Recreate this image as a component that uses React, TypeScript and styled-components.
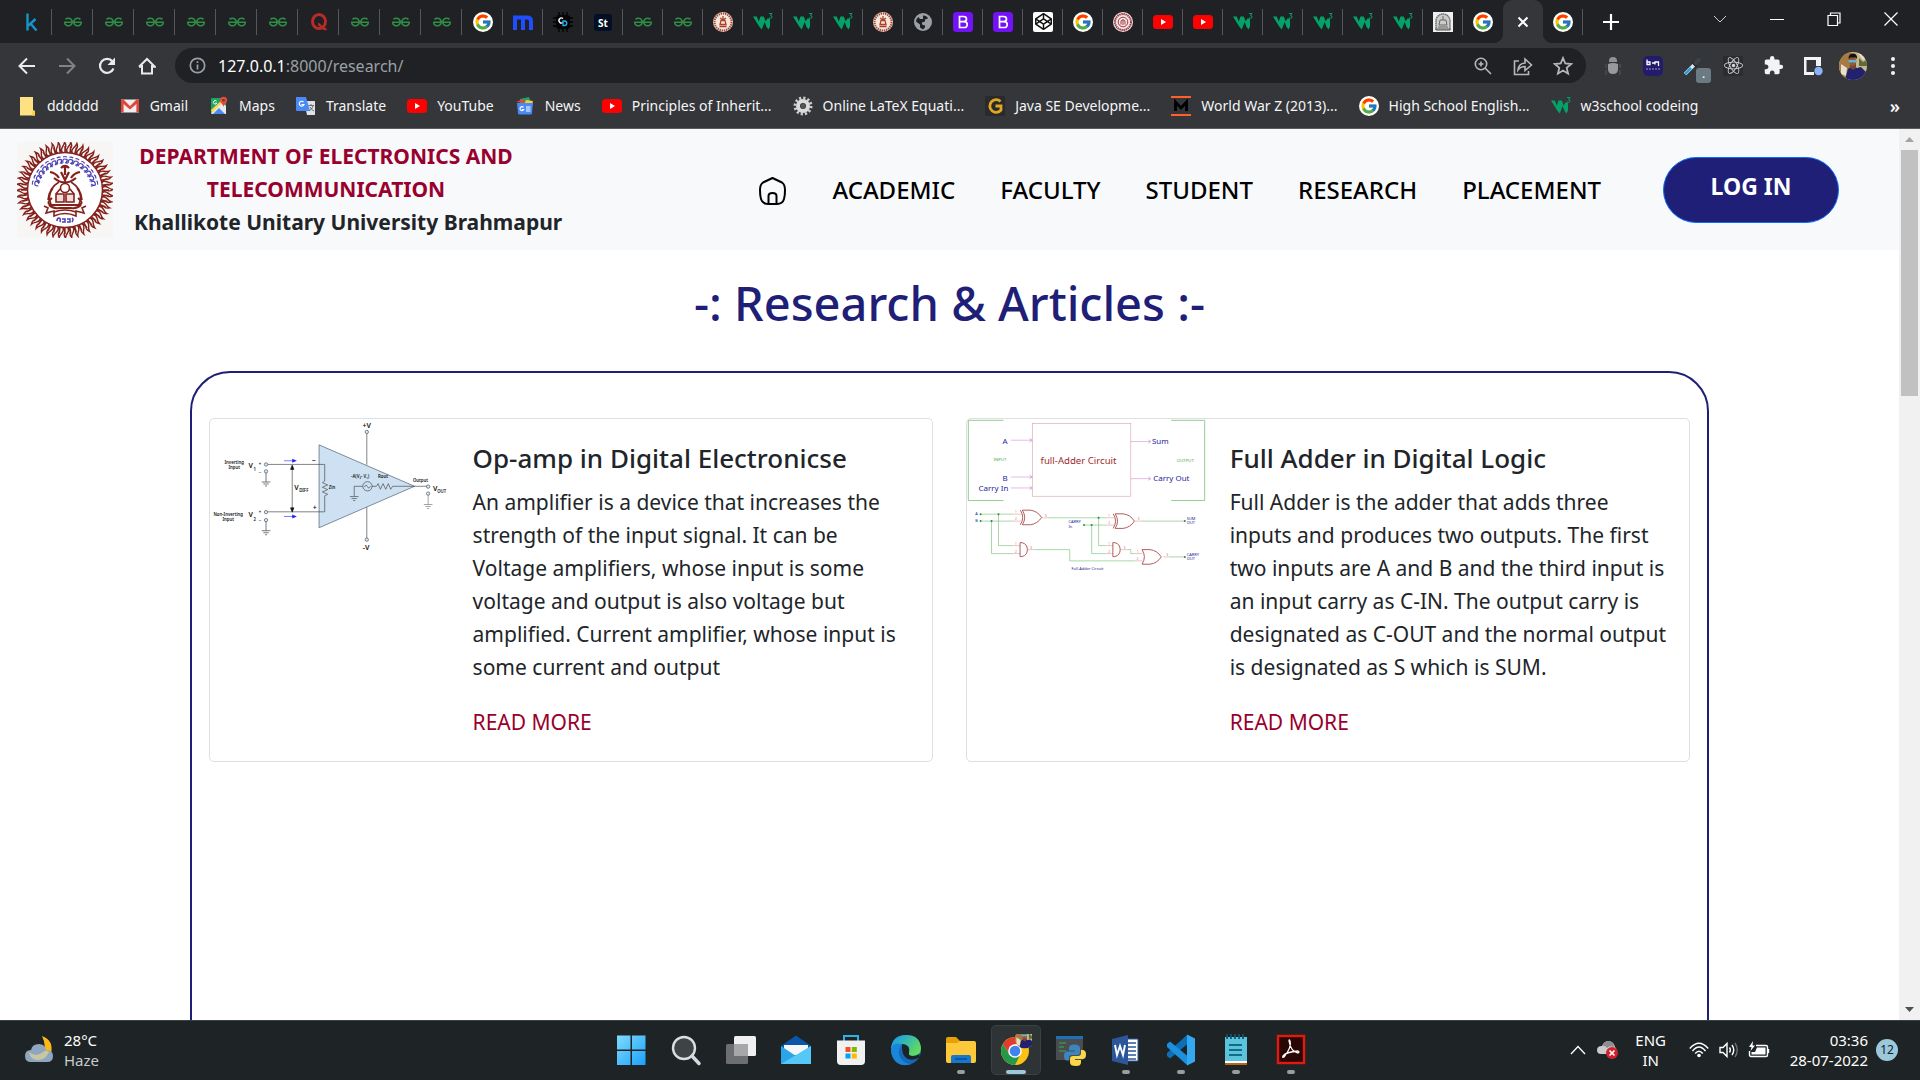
import React from "react";
import styled, { createGlobalStyle, css } from "styled-components";
import { FcGoogle } from "react-icons/fc";
import { FaReact, FaCodepen } from "react-icons/fa";
import { MdExtension } from "react-icons/md";
import { SiGeeksforgeeks } from "react-icons/si";

const GlobalStyle = createGlobalStyle`
  * { box-sizing: border-box; }
  html, body, #root { height: 100%; }
  body { margin: 0; overflow: hidden; font-family: "Noto Sans", "Open Sans", sans-serif; color: #212529; background: #fff; }
  h1, h2, p, ul { margin: 0; padding: 0; }
  ul { list-style: none; }
  a { color: inherit; text-decoration: none; }
  button { font: inherit; color: inherit; background: none; border: 0; padding: 0; }
  svg { display: block; flex: none; }
`;

const Desktop = styled.div`
  display: grid;
  grid-template-rows: auto minmax(0, 1fr) 60px;
  height: 100vh;
`;

/* ---------- favicons and small marks ---------- */

const IconBox = styled.span<{ $bg?: string; $round?: string; $color?: string }>`
  display: flex;
  align-items: center;
  justify-content: center;
  flex: none;
  width: 20px;
  height: 20px;
  background: ${(p) => p.$bg ?? "transparent"};
  border-radius: ${(p) => p.$round ?? "0"};
  color: ${(p) => p.$color ?? "inherit"};
`;

const GoogleMark = () => (
  <IconBox $bg="#fff" $round="50%"><FcGoogle size={18} /></IconBox>
);

const GfgMark = () => (
  <IconBox $color="#2f8d46"><SiGeeksforgeeks size={18} /></IconBox>
);

const YouTubeMark = () => (
  <svg width="20" height="20" viewBox="0 0 20 20">
    <rect y="3" width="20" height="14" rx="3.5" fill="#f00" />
    <path d="M8 7l5 3-5 3z" fill="#fff" />
  </svg>
);

const W3Mark = () => (
  <svg width="20" height="20" viewBox="0 0 20 20">
    <path d="M0 4.500h3.800l2 5 1.700-5h3.300l1.900 5 1.600-3h2.700v8l-1.600 3-2.100-3-1.600-4.500-3 7.500-2.500-3z" fill="#04a268" />
    <path d="M16 1.500h3l-1.500 2q2 .2 1.500 2-1 1.500-2.800.2" fill="none" stroke="#04a268" strokeWidth="1" />
  </svg>
);

const KMark = () => (
  <svg width="20" height="20" viewBox="0 0 20 20" fill="none" stroke="#1296cc" strokeWidth="2.400">
    <path d="M5.500 1.500v17M13.500 7l-7 6.500M8.500 11.500l6 7" />
  </svg>
);

const QMark = () => (
  <svg width="20" height="20" viewBox="0 0 20 20" fill="none" stroke="#b92b27">
    <ellipse cx="10" cy="9.500" rx="6.500" ry="7" strokeWidth="3" />
    <path d="M9 12c3 0 3 6 8.500 5" strokeWidth="2.400" />
  </svg>
);

const MMark = () => (
  <svg width="20" height="20" viewBox="0 0 20 20" fill="none" stroke="#1f4dff" strokeWidth="4">
    <path d="M2 18V4M10 18V5M18 18V9q0-3.500-4-3.500H0" />
  </svg>
);

const ChipMark = () => (
  <svg width="20" height="20" viewBox="0 0 20 20">
    <path d="M6 0v20M10 0v20M14 0v20M0 6h20M0 10h20M0 14h20" stroke="#000" strokeWidth="1.300" />
    <rect x="3" y="3" width="14" height="14" rx="3" fill="#050505" />
    <path d="M10 6.500a2.500 2.500 0 1 0 0 4" fill="none" stroke="#fff" strokeWidth="1.400" />
    <path d="M10 9h1.500a2 2 0 0 1 0 4.500H10z" fill="none" stroke="#1ab2e8" strokeWidth="1.400" />
  </svg>
);

const StMark = () => (
  <svg width="20" height="20" viewBox="0 0 20 20">
    <rect x="1" y="2" width="18" height="17" rx="3" fill="#020f24" />
    <text x="10" y="14.500" textAnchor="middle" fontSize="10" fontWeight="700" fill="#fff">St</text>
  </svg>
);

const SealMark = ({ color }: { color: string }) => (
  <svg width="20" height="20" viewBox="0 0 20 20">
    <circle cx="10" cy="10" r="10" fill="#f5e6de" />
    <circle cx="10" cy="10" r="8.500" fill="none" stroke={color} strokeWidth="2" strokeDasharray="1.400 .8" />
    <path d="M10 4v3M7 6l3 2 3-2M6.500 14.500h7M7 12.500h6l-1-4H8z" fill="none" stroke={color} strokeWidth="1.300" />
  </svg>
);

const RingSealMark = () => (
  <svg width="20" height="20" viewBox="0 0 20 20" fill="none" stroke="#a03a44">
    <circle cx="10" cy="10" r="10" fill="#f2e6e6" stroke="none" />
    <circle cx="10" cy="10" r="8" strokeWidth="2" strokeDasharray="1.500 .6" />
    <circle cx="10" cy="10" r="4.800" />
    <path d="M8 12.500V9q2-3 4 0v3.500M10 8v5" />
  </svg>
);

const GlobeMark = () => (
  <svg width="20" height="20" viewBox="0 0 20 20">
    <circle cx="10" cy="10" r="9" fill="#9aa0a6" />
    <path d="M10 3.500q4 0 5 3l-3 1v2l-3 1v2l3 1v2l-2 2-3-2v-3L3 9.500q0-3 2.500-4.500L7 7h3z" fill="#202124" />
  </svg>
);

const BootstrapMark = () => (
  <svg width="20" height="20" viewBox="0 0 20 20">
    <rect width="20" height="20" rx="3.500" fill="#7412f7" />
    <path d="M6.500 4.500h4q3 0 3 2.600t-3 2.600h-4zM6.500 9.700h4.500q3.200 0 3.200 2.900t-3.200 2.900H6.500z" fill="none" stroke="#fff" strokeWidth="1.700" />
  </svg>
);

const CodepenMark = () => (
  <IconBox $bg="#fff" $round="2px" $color="#111"><FaCodepen size={17} /></IconBox>
);

const CrestMark = () => (
  <svg width="20" height="20" viewBox="0 0 20 20" fill="none" stroke="#666">
    <rect width="20" height="20" fill="#eee" stroke="none" />
    <path d="M3 18V9a7 7 0 0 1 14 0v9z" fill="#ccc" strokeWidth="1.400" strokeDasharray="1.500 .5" />
    <path d="M10 4v4M7 8h6l1 5H6zM5 15h10M2 17h16" strokeWidth="1" />
  </svg>
);

const FolderMark = () => (
  <svg width="20" height="20" viewBox="0 0 20 20">
    <path d="M3 1h13v13l2 1v4.500H3z" fill="#ffe082" />
    <path d="M15 19.500v-4q1.500-1 3 0v4z" fill="#ffcf48" />
  </svg>
);

const GmailMark = () => (
  <svg width="20" height="20" viewBox="0 0 20 20">
    <path d="M1 3.500h18v13H1z" fill="#eee" />
    <path d="M1 3.500h2.500L10 10l6.500-6.500H19v13h-2.600V8L10 13.500 3.600 8v8.500H1z" fill="#e0463a" />
  </svg>
);

const MapsMark = () => (
  <svg width="20" height="20" viewBox="0 0 20 20">
    <rect x="2" y="2" width="15" height="16" rx="1" fill="#1fa463" />
    <path d="M2 17L13 6l4 4v8H3z" fill="#e8eaed" />
    <path d="M4 18l6-6 6 6z" fill="#4a8af4" />
    <path d="M2 14L13 4v3L3 17z" fill="#ffd54b" />
    <path d="M14.500 11C14 8 11 7 11 4.300a3.600 3.600 0 0 1 7.200 0C18.200 7 15 8 14.500 11z" fill="#e04a3f" />
    <circle cx="14.600" cy="4.200" r="1.300" fill="#8c2b22" />
    <path d="M7.500 5a1.800 1.800 0 1 0 .3 2.200H6.200" fill="none" stroke="#fff" />
  </svg>
);

const TranslateMark = () => (
  <svg width="20" height="20" viewBox="0 0 20 20">
    <path d="M8 5h11v14h-8z" fill="#dfe1e5" />
    <path d="M0 1h10l4 14H1q-1 0-1-1z" fill="#4a8af4" />
    <path d="M7.500 6a2.400 2.400 0 1 0 .5 2.500H5.500" fill="none" stroke="#fff" strokeWidth="1.200" />
    <path d="M12.500 9.500h5.500M15 8v1.500M17 10q-1 3.500-4 5M14 11q1 2.500 4 4" fill="none" stroke="#6b7075" strokeWidth="1" />
  </svg>
);

const NewsMark = () => (
  <svg width="20" height="20" viewBox="0 0 20 20">
    <path d="M5 3l9-2 2 6H5z" fill="#1fa463" />
    <path d="M1 6l7-3 3 4z" fill="#e0463a" />
    <path d="M11 4l7 1-1 4h-8z" fill="#ffc83d" />
    <path d="M2 7h16l-1 10q0 1.500-1.500 1.500h-11Q3 18.500 3 17z" fill="#4a8af4" />
    <path d="M8.500 11.300a2 2 0 1 0 .3 2.200H7M11 11h4.500M11 13h4.500M11 15h4.500" fill="none" stroke="#fff" strokeWidth="1.100" />
  </svg>
);

const GearMark = () => (
  <svg width="20" height="20" viewBox="0 0 20 20" fill="none">
    <circle cx="10" cy="10" r="8" stroke="#c9cbcd" strokeWidth="3" strokeDasharray="2.200 1.990" />
    <circle cx="10" cy="10" r="5" stroke="#dadada" strokeWidth="4" />
    <circle cx="10" cy="10" r="2.200" fill="#55575a" />
  </svg>
);

const GoldGMark = () => (
  <svg width="20" height="20" viewBox="0 0 20 20">
    <rect width="20" height="20" fill="#292a2c" />
    <path d="M15.500 5.500A6.300 6.300 0 1 0 16 14v-4h-5.500" fill="none" stroke="#dfa722" strokeWidth="2.800" />
  </svg>
);

const MovieMark = () => (
  <svg width="20" height="20" viewBox="0 0 20 20">
    <path d="M0 1h20M0 19h20" stroke="#ff5f2b" strokeWidth="2.200" />
    <path d="M4.500 15V6l5.500 6 5.500-6v9" fill="none" stroke="#000" strokeWidth="2.800" />
  </svg>
);

/* ---------- browser: tab strip ---------- */

const Chrome = styled.header`
  background: #35363a;
  color: #e8eaed;
  border-bottom: 1px solid #5a5b5e;
`;

const TabStrip = styled.div`
  display: flex;
  align-items: stretch;
  height: 43px;
  padding-left: 11px;
  background: #202124;
`;

const Tab = styled.button<{ $wide?: boolean; $active?: boolean; $plain?: boolean }>`
  position: relative;
  display: flex;
  align-items: center;
  justify-content: center;
  width: ${(p) => (p.$wide ? "41px" : "40px")};
  &::after {
    content: "";
    position: absolute;
    right: 0;
    top: 9px;
    width: 1px;
    height: 26px;
    background: ${(p) => (p.$plain || p.$active ? "transparent" : "#55575b")};
  }
  ${(p) => p.$active && css`
    background: #35363a;
    border-radius: 9px 9px 0 0;
    &::before {
      content: "";
      position: absolute;
      left: -9px;
      right: -9px;
      bottom: 0;
      height: 9px;
      background:
        radial-gradient(circle at 0 0, transparent 9px, #35363a 9px) left / 9px 9px no-repeat,
        radial-gradient(circle at 9px 0, transparent 9px, #35363a 9px) right / 9px 9px no-repeat;
    }
  `}
`;

const NewTab = styled.button`
  display: flex;
  align-items: center;
  justify-content: center;
  width: 56px;
`;

const WindowControls = styled.div`
  display: flex;
  margin-left: auto;
  padding: 0 1px 6px 0;
`;

const WindowButton = styled.button`
  display: flex;
  align-items: center;
  justify-content: center;
  width: 57px;
`;

const tabs: { icon: () => React.ReactElement; name: string; wide?: boolean }[] = [
  { icon: KMark, name: "k", wide: true },
  ...Array.from({ length: 6 }, () => ({ icon: GfgMark, name: "GfG", wide: true })),
  { icon: QMark, name: "Q", wide: true },
  ...Array.from({ length: 3 }, () => ({ icon: GfgMark, name: "GfG", wide: true })),
  { icon: GoogleMark, name: "Google", wide: true },
  { icon: MMark, name: "M" },
  { icon: ChipMark, name: "Circuit" },
  { icon: StMark, name: "St" },
  { icon: GfgMark, name: "GfG" },
  { icon: GfgMark, name: "GfG" },
  { icon: () => <SealMark color="#a8442c" />, name: "University" },
  ...Array.from({ length: 3 }, () => ({ icon: W3Mark, name: "W3" })),
  { icon: () => <SealMark color="#a8442c" />, name: "University" },
  { icon: GlobeMark, name: "Site" },
  { icon: BootstrapMark, name: "Bootstrap" },
  { icon: BootstrapMark, name: "Bootstrap" },
  { icon: CodepenMark, name: "CodePen" },
  { icon: GoogleMark, name: "Google" },
  { icon: RingSealMark, name: "Seal" },
  { icon: YouTubeMark, name: "YouTube" },
  { icon: YouTubeMark, name: "YouTube" },
  ...Array.from({ length: 5 }, () => ({ icon: W3Mark, name: "W3" })),
  { icon: CrestMark, name: "Crest" },
];

const Tabs = () => (
  <TabStrip>
    {tabs.map(({ icon: Icon, name, wide }, i) => (
      <Tab key={i} $wide={wide} aria-label={name}><Icon /></Tab>
    ))}
    <Tab $plain aria-label="Google"><GoogleMark /></Tab>
    <Tab $active aria-label="Close tab">
      <svg width="12" height="12" viewBox="0 0 12 12" stroke="#fff" strokeWidth="2"><path d="M1.500 1.500l9 9M10.500 1.500l-9 9" /></svg>
    </Tab>
    <Tab aria-label="Google"><GoogleMark /></Tab>
    <NewTab aria-label="New tab">
      <svg width="16" height="16" viewBox="0 0 16 16" stroke="#fff" strokeWidth="2.200"><path d="M8 0v16M0 8h16" /></svg>
    </NewTab>
    <WindowControls>
      <WindowButton aria-label="Search tabs">
        <svg width="14" height="14" viewBox="0 0 14 14" fill="none" stroke="#cfd1d4"><path d="M1 4l6 6 6-6" /></svg>
      </WindowButton>
      <WindowButton aria-label="Minimize">
        <svg width="14" height="14" viewBox="0 0 14 14" stroke="#fff"><path d="M0 7.500h14" /></svg>
      </WindowButton>
      <WindowButton aria-label="Restore">
        <svg width="14" height="14" viewBox="0 0 14 14" fill="none" stroke="#fff" strokeWidth="1.200"><path d="M1 3.500h9.500v10H1zM3.500 3.500V1H13v10h-2.500" /></svg>
      </WindowButton>
      <WindowButton aria-label="Close">
        <svg width="14" height="14" viewBox="0 0 14 14" stroke="#fff" strokeWidth="1.200"><path d="M.5.5l13 13M13.500.5l-13 13" /></svg>
      </WindowButton>
    </WindowControls>
  </TabStrip>
);

/* ---------- browser: toolbar and bookmarks ---------- */

const Toolbar = styled.div`
  display: flex;
  align-items: center;
  height: 45px;
  padding: 0 7px;
`;

const ToolButton = styled.button`
  position: relative;
  display: flex;
  align-items: center;
  justify-content: center;
  flex: none;
  width: 40px;
  height: 35px;
`;

const AddressBar = styled.div`
  display: flex;
  align-items: center;
  flex: 1;
  height: 35px;
  margin: 0 7px 0 8px;
  padding: 0 3px 0 14px;
  border-radius: 18px;
  background: #202124;
`;

const UrlView = styled.label`
  position: relative;
  display: flex;
  flex: 1;
  margin-left: 12px;
  font-size: 16px;
  line-height: 24px;
  color: #9aa0a6;
`;

const UrlHost = styled.span`
  color: #fff;
`;

const UrlInput = styled.input`
  position: absolute;
  inset: 0;
  width: 100%;
  border: 0;
  background: transparent;
`;

const PickerBadge = styled.span`
  position: absolute;
  right: 2px;
  bottom: 0;
  width: 15px;
  height: 15px;
  border-radius: 3px;
  background: #6b7b83;
  color: #fff;
  font-size: 12px;
  line-height: 11px;
  text-align: center;
`;

const Portrait = ({ size }: { size: number }) => (
  <svg width={size} height={size} viewBox="0 0 28 28">
    <defs><clipPath id={`portrait${size}`}><circle cx="14" cy="14" r="14" /></clipPath></defs>
    <g clipPath={`url(#portrait${size})`}>
      <rect width="28" height="28" fill="#c9b98a" />
      <path d="M0 0h12v28H0z" fill="#a77a42" />
      <path d="M2 12l6 4-1 8-5-2zM18 0l6 8 4-2V0z" fill="#e7e0cd" />
      <path d="M20 6l4 4 4-2v6h-8z" fill="#5f6a3a" />
      <path d="M6 28l3-11 4-3 5 2 4-1 5 5v8z" fill="#20216f" />
      <path d="M11 10h6v6l-3 2-3-2z" fill="#7a452e" />
      <ellipse cx="13.500" cy="9" rx="3.800" ry="5" fill="#94593d" />
      <path d="M9.500 7q0-5.500 4.500-5.500T18 7l-1.500-1.500h-5z" fill="#16110f" />
      <path d="M9.500 8h8v2.200l-3 .6-1-1-1 1-3-.6z" fill="#5bbbd6" />
    </g>
  </svg>
);

const Bookmarks = styled.nav`
  display: flex;
  align-items: center;
  gap: 21px;
  height: 40px;
  padding: 0 20px 4px 17px;
  font-size: 14px;
  line-height: 20px;
  color: #f4f5f6;
`;

const Bookmark = styled.a`
  display: flex;
  align-items: center;
  gap: 10px;
  white-space: nowrap;
`;

const MoreBookmarks = styled.button`
  margin-left: auto;
  font-size: 18px;
  font-weight: 600;
  line-height: 20px;
`;

const bookmarks: [() => React.ReactElement, string][] = [
  [FolderMark, "dddddd"],
  [GmailMark, "Gmail"],
  [MapsMark, "Maps"],
  [TranslateMark, "Translate"],
  [YouTubeMark, "YouTube"],
  [NewsMark, "News"],
  [YouTubeMark, "Principles of Inherit..."],
  [GearMark, "Online LaTeX Equati..."],
  [GoldGMark, "Java SE Developme..."],
  [MovieMark, "World War Z (2013)..."],
  [GoogleMark, "High School English..."],
  [W3Mark, "w3school codeing"],
];

const stroke = { fill: "none", stroke: "#e8eaed", strokeWidth: 2 } as const;
const faint = { fill: "none", stroke: "#b4b7bb", strokeWidth: 1.6 } as const;

const BrowserChrome = () => (
  <Chrome>
    <Tabs />
    <Toolbar>
      <ToolButton aria-label="Back"><svg width="18" height="18" viewBox="0 0 18 18" {...stroke}><path d="M17 9H2M9 1.500L1.500 9 9 16.500" /></svg></ToolButton>
      <ToolButton aria-label="Forward"><svg width="18" height="18" viewBox="0 0 18 18" {...stroke} stroke="#808387"><path d="M1 9h15M9 1.500L16.500 9 9 16.500" /></svg></ToolButton>
      <ToolButton aria-label="Reload"><svg width="18" height="18" viewBox="0 0 18 18" {...stroke} strokeWidth={2.2}><path d="M15.500 11.500A7 7 0 1 1 14.500 4.500" /><path d="M17 .5V8H9.500z" fill="#e8eaed" stroke="none" /></svg></ToolButton>
      <ToolButton aria-label="Home"><svg width="18" height="18" viewBox="0 0 18 18" {...stroke}><path d="M4 8v8.500h10V8M1 9.800l8-7.800 8 7.800H14M4 9.800H1" /></svg></ToolButton>
      <AddressBar>
        <svg width="17" height="17" viewBox="0 0 17 17" fill="none" stroke="#9aa0a6" strokeWidth="1.700"><circle cx="8.500" cy="8.500" r="7.200" /><path d="M8.500 7.500v5M8.500 4.300v1.700" /></svg>
        <UrlView>
          <UrlHost>127.0.0.1</UrlHost>:8000/research/
          <UrlInput type="text" aria-label="Address" />
        </UrlView>
        <ToolButton aria-label="Zoom"><svg width="18" height="18" viewBox="0 0 18 18" {...faint}><circle cx="7" cy="7" r="5.700" /><path d="M11 11l6 6M7 4.500v5M4.500 7h5" /></svg></ToolButton>
        <ToolButton aria-label="Share"><svg width="20" height="20" viewBox="0 0 20 20" {...faint}><path d="M6 5H1.500v13.500h14V15M5 14q.5-6.500 7-7V3l6.500 6L12 14.500v-4Q7.500 10.500 5 14z" /></svg></ToolButton>
        <ToolButton aria-label="Bookmark"><svg width="20" height="20" viewBox="0 0 20 20" {...faint} strokeWidth={1.8}><path d="M10 2l2.300 5.500 6 .5-4.600 3.900 1.400 5.800L10 14.600l-5.100 3.100 1.400-5.800L1.700 8l6-.5z" /></svg></ToolButton>
      </AddressBar>
      <ToolButton aria-label="Bug"><svg width="16" height="20" viewBox="0 0 16 20"><path d="M1 8v4M15 8v4M1 14v5M15 14v5M3 10h10" stroke="#55575a" /><path d="M4 5q0-4 4-4t4 4v1H4z" fill="#8f9194" /><path d="M3 8q5-2 10 0v5q0 5-5 5t-5-5z" fill="#98999b" /></svg></ToolButton>
      <ToolButton aria-label="Best quiz"><svg width="20" height="20" viewBox="0 0 20 20"><rect width="20" height="20" rx="5" fill="#241c6a" /><path d="M4 3.500v5h3V6H4M9 7h3M12 8.500V6h3.500v4" fill="none" stroke="#fff" strokeWidth="1.300" /><path d="M3 13h14" stroke="#9896c4" strokeWidth="1.200" strokeDasharray="2 1" /></svg></ToolButton>
      <ToolButton aria-label="Colour picker">
        <svg width="20" height="20" viewBox="0 0 20 20"><path d="M2 18L11 9" stroke="#d3e8f2" strokeWidth="3.600" /><path d="M2 18L8 12" stroke="#2f9fd6" strokeWidth="2.600" /><path d="M9.500 6.500l4 4" stroke="#222" strokeWidth="2" /><path d="M11.500 8.500l5.500-6" stroke="#3b444b" strokeWidth="4" /></svg>
        <PickerBadge>.</PickerBadge>
      </ToolButton>
      <ToolButton aria-label="React"><IconBox $bg="#2b2c30" $color="#d6d7d9"><FaReact size={19} /></IconBox></ToolButton>
      <ToolButton aria-label="Extensions"><MdExtension size={21} color="#f1f3f4" /></ToolButton>
      <ToolButton aria-label="Side panel"><svg width="20" height="20" viewBox="0 0 20 20"><path d="M1 1h17v9h-5V4H3.500v12H11v3H1z" fill="#f1f3f4" /><circle cx="15.500" cy="15" r="4.200" fill="#8ab4f8" /></svg></ToolButton>
      <ToolButton aria-label="Profile"><Portrait size={28} /></ToolButton>
      <ToolButton aria-label="Menu"><svg width="4" height="18" viewBox="0 0 4 18" fill="#f1f3f4"><circle cx="2" cy="2" r="2" /><circle cx="2" cy="9" r="2" /><circle cx="2" cy="16" r="2" /></svg></ToolButton>
    </Toolbar>
    <Bookmarks>
      {bookmarks.map(([Icon, label]) => (
        <Bookmark key={label} href="#"><Icon />{label}</Bookmark>
      ))}
      <MoreBookmarks aria-label="More bookmarks">»</MoreBookmarks>
    </Bookmarks>
  </Chrome>
);

/* ---------- site ---------- */

const Viewport = styled.div`
  display: flex;
  min-height: 0;
`;

const Page = styled.div`
  flex: 1;
  overflow: hidden;
  background: #fff;
`;

const SiteHeader = styled.div`
  display: flex;
  align-items: center;
  height: 121px;
  padding: 0 60px 0 17px;
  background: #f8f9fb;
`;

const Brand = styled.a`
  display: flex;
  align-items: center;
  gap: 21px;
`;

const BrandText = styled.div`
  font-size: 21px;
  font-weight: 700;
  line-height: 33px;
`;

const Department = styled.p`
  width: 384px;
  color: #98002e;
  text-align: center;
`;

const Menu = styled.ul`
  display: flex;
  align-items: center;
  gap: 45px;
  margin-left: auto;
  color: #000;
  font-size: 24px;
  font-weight: 500;
  line-height: 36px;
`;

const LoginButton = styled.button`
  width: 176px;
  height: 66px;
  margin-left: 62px;
  padding-bottom: 8px;
  border: 1px solid #0d6efd;
  border-radius: 36px;
  background: #1f1f78;
  color: #fff;
  font-size: 23px;
  font-weight: 700;
`;

const PageTitle = styled.h1`
  margin: 24px 0 39px;
  color: #1f1f78;
  font-size: 47px;
  font-weight: 500;
  line-height: 58px;
  text-align: center;
`;

const Articles = styled.main`
  display: grid;
  grid-template-columns: 1fr 1fr;
  align-items: start;
  gap: 33px;
  width: 80%;
  min-height: 1200px;
  margin: 0 auto;
  padding: 45px 17px;
  border: 2px solid #1f1f78;
  border-radius: 40px;
`;

const Card = styled.article`
  display: grid;
  grid-template-columns: 1fr 2fr;
  border: 1px solid #dfdfdf;
  border-radius: 5px;
`;

const Figure = styled.svg`
  width: 100%;
  height: auto;
  font-family: "Noto Sans", sans-serif;
`;

const CardBody = styled.div`
  padding: 23px 18px 22px 22px;
  font-size: 21px;
  line-height: 33px;
`;

const CardTitle = styled.h2`
  margin-bottom: 11px;
  font-size: 26px;
  font-weight: 500;
  line-height: 33px;
`;

const ReadMore = styled.a`
  display: block;
  margin-top: 22px;
  color: #98002e;
`;

const Emblem = () => {
  const rays = Array.from({ length: 48 }, (_, i) => (i * 360) / 48);
  return (
    <svg width="96" height="96" viewBox="0 0 96 96">
      <rect width="96" height="96" fill="#f7f6f5" />
      <g fill="none" stroke="#84211b" strokeWidth="1.400">
        {rays.map((a) => (
          <path key={a} d="M45.500 11q-2-3 0-6t2-5q2 3 1 5t2 6M48 11V4" transform={`rotate(${a} 48 48)`} />
        ))}
      </g>
      <circle cx="48" cy="48" r="37.500" fill="#fff" stroke="#84211b" strokeWidth="1.500" />
      <g fill="none" stroke="#4a3fb5" strokeWidth="1.200">
        {Array.from({ length: 15 }, (_, i) => (
          <path key={i} d="M46 21q-1-4 2-4t2 2-2 2M50 17v5M46 15q2-1 4 0" transform={`rotate(${i * 11 - 77} 48 48)`} />
        ))}
        <path d="M40 79q0-3 2-3t1 4M45 77h3v3h-3M50 77h3v3h-3M55 76q2 1 0 4" strokeWidth="1.500" />
      </g>
      <g fill="none" stroke="#84211b" strokeWidth="1.600">
        <circle cx="48" cy="46" r="4.500" />
        <path d="M48 24v9M44 26q4-4 8 0M33 30q6 1 9 6M63 30q-6 1-9 6M37 36q11 9 22 0M44 30l4 8 4-8" strokeWidth="2.200" />
        <path d="M42 40q-10 6-11 18M54 40q10 6 11 18M36 46q-6 8-2 16M60 46q6 8 2 16" />
        <path d="M39 52h8v8h-8zM49 52h8v8h-8z" fill="#f0dcd8" />
        <path d="M35 56q-7 6 0 7h26q7-1 0-7M32 63q4 4 10 3h12q6 1 10-3" strokeWidth="2" />
        <path d="M27 64l4 2-2 5 8-2v5q11-5 22 0v-5l8 2-2-5 4-2" />
        <path d="M37 70q11-4 22 0M43 47l-4 5M53 47l4 5" />
      </g>
    </svg>
  );
};

const Ground = ({ x, y, color = "#333" }: { x: number; y: number; color?: string }) => (
  <path d={`M${x} ${y}v30M${x - 13} ${y + 30}h26M${x - 8} ${y + 36}h16M${x - 3} ${y + 42}h6`} stroke={color} />
);

const OpAmpFigure = () => (
  <Figure viewBox="90 177 726 420" fill="none" stroke="#444" strokeWidth="2">
    <path d="M419 255v250l288-125z" fill="#cde1f2" stroke="#48586a" />
    <path d="M563 221v94M563 443v93M264 314h172v50l-7 5 16 7-16 7 16 7-16 7 16 7-9 5v48H264" />
    <path d="M551 380h-26v30M512 411h26M517 417h16M522 423h6M578 380h14l5-8 7 17 8-17 8 17 8-17 7 17 6-9h104" />
    <circle cx="565" cy="380" r="14" />
    <path d="M556 382q5-10 9-1t9-1M338 322v130" />
    <path d="M338 316l-5 13h10zM338 458l-5-13h10z" fill="#111" stroke="#111" />
    <path d="M313 303h28M313 471h28" stroke="#3a3aff" />
    <path d="M338 297l14 6-14 6zM338 465l14 6-14 6z" fill="#2222ff" stroke="none" />
    <Ground x={259} y={337} /><Ground x={259} y={484} /><Ground x={748} y={405} color="#777" />
    <g fill="#dcecf8" stroke="#3c4c5c">
      <circle cx="563" cy="216" r="5" /><circle cx="563" cy="541" r="5" />
      <circle cx="259" cy="314" r="5" /><circle cx="259" cy="335" r="5" />
      <circle cx="259" cy="458" r="5" /><circle cx="259" cy="482" r="5" />
      <circle cx="748" cy="381" r="5" /><circle cx="748" cy="402" r="5" />
    </g>
    <g fill="#111" stroke="none" fontWeight="600" textAnchor="middle">
      <g fontSize="21">
        <text x="563" y="204">+V</text><text x="561" y="572">-V</text>
        <text x="213" y="326">V</text><text x="213" y="474">V</text>
        <text x="351" y="392">V</text><text x="769" y="393">V</text>
        <text x="404" y="310">−</text><text x="406" y="451">+</text>
      </g>
      <g fontSize="13">
        <text x="163" y="313">Inverting</text><text x="163" y="327">Input</text>
        <text x="145" y="471">Non-Inverting</text><text x="145" y="485">Input</text>
        <text x="725" y="367">Output</text>
        <text x="543" y="356">-A(V₂- V₁)</text><text x="612" y="356">Rout</text><text x="458" y="389">Zin</text>
        <text x="225" y="334">1</text><text x="225" y="485">2</text>
        <text x="373" y="398">DIFF</text><text x="789" y="401">OUT</text>
        <text x="241" y="319">+</text><text x="241" y="343">−</text>
        <text x="241" y="463">+</text><text x="241" y="488">−</text>
      </g>
    </g>
  </Figure>
);

const XorGate = ({ x, y, xor = true }: { x: number; y: number; xor?: boolean }) => (
  <g transform={`translate(${x} ${y})`} stroke="#a63a3a" strokeWidth="2.500">
    <path d="M6-22h24q22 3 34 22q-12 19-34 22H6q14-22 0-44z" />
    {xor && <path d="M0-22q14 22 0 44" />}
  </g>
);

const AdderFigure = () => (
  <Figure viewBox="51 57 726 480" fill="none" stroke="#7cc47c" strokeWidth="2">
    <path d="M161 61H55v242h106M667 61h101v242H667" strokeWidth="2.500" />
    <rect x="248" y="70" width="297" height="220" stroke="#dba9ad" />
    <path d="M183 121h62M183 232h62M183 265h62M545 125h58M545 237h58" stroke="#d79ad7" />
    <path d="M240 116l8 5-8 5M240 227l8 5-8 5M240 260l8 5-8 5M598 120l7 5-7 5M598 232l7 5-7 5" stroke="#c77bc7" />
    <path d="M92 344h97M92 365h97M146 344v95h43M125 365v98h64M295 355h175M404 377h66M448 355v84h22M427 377v86h43M578 365h130M255 451h106v34h196M535 451h10v12h12M663 473h45" />
    <path d="M189 344h26M189 365h26M189 439h22M189 463h22M276 355h20M233 451h22M470 355h26M470 377h26M470 439h22M470 463h22M557 365h21M514 451h21M557 463h24M557 485h24M643 473h20" stroke="#e2a6a6" />
    <XorGate x={212} y={354} /><XorGate x={492} y={365} /><XorGate x={573} y={473} xor={false} />
    <path d="M211 430v42h6q16-4 16-21t-16-21zM491 430v42h6q16-4 16-21t-16-21z" stroke="#a63a3a" strokeWidth="2.500" />
    <g fill="#2b8a2b" stroke="none">
      <circle cx="92" cy="344" r="3" /><circle cx="92" cy="365" r="3" /><circle cx="146" cy="344" r="3" /><circle cx="125" cy="365" r="3" />
      <circle cx="448" cy="355" r="3" /><circle cx="404" cy="377" r="3" /><circle cx="427" cy="377" r="3" /><circle cx="708" cy="365" r="3" /><circle cx="708" cy="473" r="3" />
    </g>
    <g stroke="none" fill="#24249a" fontSize="24">
      <text x="158" y="131">A</text><text x="158" y="244">B</text><text x="86" y="274">Carry In</text>
      <text x="609" y="131">Sum</text><text x="613" y="245">Carry Out</text>
      <text x="273" y="192" fontSize="29" fill="#a02c2c">full-Adder Circuit</text>
      <g fontSize="13" fill="#3fa83f"><text x="131" y="185">INPUT</text><text x="684" y="188">OUTPUT</text></g>
      <g fontSize="12">
        <text x="76" y="348">A</text><text x="76" y="369">B</text>
        <text x="357" y="372">CARRY</text><text x="357" y="385">In</text>
        <text x="714" y="361">SUM</text><text x="714" y="374">OUT</text>
        <text x="714" y="469">CARRY</text><text x="714" y="482">OUT</text>
        <text x="366" y="514">Full-Adder Circuit</text>
      </g>
      <g fontSize="9" fill="#b66">
        <text x="196" y="341">1</text><text x="196" y="363">2</text><text x="196" y="436">1</text><text x="196" y="460">2</text>
        <text x="286" y="352">3</text><text x="242" y="449">3</text><text x="477" y="353">1</text><text x="477" y="374">2</text>
        <text x="477" y="437">1</text><text x="477" y="460">2</text><text x="566" y="362">3</text><text x="524" y="449">3</text>
        <text x="563" y="460">1</text><text x="563" y="482">2</text><text x="653" y="470">3</text>
      </g>
    </g>
  </Figure>
);

const articles = [
  {
    title: "Op-amp in Digital Electronicse",
    figure: OpAmpFigure,
    text: "An amplifier is a device that increases the strength of the input signal. It can be Voltage amplifiers, whose input is some voltage and output is also voltage but amplified. Current amplifier, whose input is some current and output",
  },
  {
    title: "Full Adder in Digital Logic",
    figure: AdderFigure,
    text: "Full Adder is the adder that adds three inputs and produces two outputs. The first two inputs are A and B and the third input is an input carry as C-IN. The output carry is designated as C-OUT and the normal output is designated as S which is SUM.",
  },
];

const ScrollBar = styled.div`
  display: flex;
  flex-direction: column;
  align-items: center;
  flex: none;
  width: 21px;
  background: #f1f1f1;
`;

const ScrollArrow = styled.button`
  display: flex;
  align-items: center;
  justify-content: center;
  width: 21px;
  height: 21px;
`;

const ScrollTrack = styled.div`
  flex: 1;
  width: 17px;
`;

const ScrollThumb = styled.div`
  height: 29%;
  background: #c1c1c1;
`;

const Site = () => (
  <Viewport>
    <Page>
      <SiteHeader>
        <Brand href="#">
          <Emblem />
          <BrandText>
            <Department>DEPARTMENT OF ELECTRONICS AND TELECOMMUNICATION</Department>
            <p>Khallikote Unitary University Brahmapur</p>
          </BrandText>
        </Brand>
        <Menu>
          <li>
            <a href="#" aria-label="Home">
              <svg width="29" height="32" viewBox="0 -3 29 32" fill="none" stroke="#000" strokeWidth="2" strokeLinejoin="round">
                <path d="M14.500 1L5 5.500Q2 7.500 2 13q0 6 1 9 1.500 5 7 5h9q5.500 0 7-5 1-3 1-9 0-5.500-3-7.500z" />
                <path d="M10.500 27v-8q0-3 4-3t4 3v8" />
              </svg>
            </a>
          </li>
          {["ACADEMIC", "FACULTY", "STUDENT", "RESEARCH", "PLACEMENT"].map((m) => (
            <li key={m}><a href="#">{m}</a></li>
          ))}
        </Menu>
        <LoginButton>LOG IN</LoginButton>
      </SiteHeader>
      <PageTitle>-: Research &amp; Articles :-</PageTitle>
      <Articles>
        {articles.map(({ title, figure: Fig, text }) => (
          <Card key={title}>
            <Fig />
            <CardBody>
              <CardTitle>{title}</CardTitle>
              <p>{text}</p>
              <ReadMore href="#">READ MORE</ReadMore>
            </CardBody>
          </Card>
        ))}
      </Articles>
    </Page>
    <ScrollBar>
      <ScrollArrow aria-label="Scroll up"><svg width="9" height="5" viewBox="0 0 9 5"><path d="M0 5l4.500-5L9 5z" fill="#a3a3a3" /></svg></ScrollArrow>
      <ScrollTrack><ScrollThumb /></ScrollTrack>
      <ScrollArrow aria-label="Scroll down"><svg width="9" height="5" viewBox="0 0 9 5"><path d="M0 0l4.500 5L9 0z" fill="#505050" /></svg></ScrollArrow>
    </ScrollBar>
  </Viewport>
);

/* ---------- taskbar ---------- */

const Taskbar = styled.footer`
  display: grid;
  grid-template-columns: 1fr auto 1fr;
  align-items: center;
  padding: 0 22px 2px 24px;
  border-top: 1px solid #3b4142;
  background: #1e2425;
  color: #fff;
  font-size: 15px;
  line-height: 20px;
`;

const Weather = styled.button`
  display: flex;
  align-items: center;
  justify-self: start;
  gap: 10px;
  text-align: left;
`;

const Muted = styled.div`
  color: #c9cccc;
`;

const Apps = styled.div`
  display: flex;
  gap: 5px;
`;

const AppButton = styled.button<{ $state?: "open" | "active" }>`
  position: relative;
  display: flex;
  align-items: center;
  justify-content: center;
  width: 50px;
  height: 50px;
  border-radius: 5px;
  border: 1px solid ${(p) => (p.$state === "active" ? "#3b4041" : "transparent")};
  background: ${(p) => (p.$state === "active" ? "#2e3435" : "transparent")};
  &::after {
    content: "";
    position: absolute;
    bottom: 0;
    width: ${(p) => (p.$state === "active" ? "20px" : "8px")};
    height: 4px;
    border-radius: 2px;
    background: ${(p) => (p.$state === "active" ? "#9cc6dc" : p.$state ? "#9a9d9d" : "transparent")};
  }
`;

const Tray = styled.div`
  display: flex;
  align-items: center;
  justify-self: end;
`;

const TrayIcon = styled.button`
  display: flex;
  align-items: center;
  justify-content: center;
  width: 30px;
  height: 40px;
`;

const Language = styled.button`
  width: 56px;
  margin-right: 5px;
  text-align: center;
`;

const Clock = styled.button`
  margin: 0 8px 0 16px;
  text-align: right;
`;

const Notifications = styled.button`
  width: 22px;
  height: 22px;
  border-radius: 50%;
  background: #9cc8dc;
  color: #12202a;
  font-size: 12px;
  line-height: 22px;
`;

const AppSvg = ({ children }: { children: React.ReactNode }) => (
  <svg width="32" height="32" viewBox="0 0 32 32">{children}</svg>
);

const apps: { name: string; state?: "open" | "active"; art: React.ReactNode }[] = [
  { name: "Start", art: <><defs><linearGradient id="win" x1="0" y1="0" x2="1" y2="1"><stop offset="0" stopColor="#7fdcfd" /><stop offset="1" stopColor="#1ba0fb" /></linearGradient></defs><path d="M2 1.500h13.500V15.500H2zM17 1.500h13.500V15.500H17zM2 17h13.500v14H2zM17 17h13.500v14H17z" fill="url(#win)" /></> },
  { name: "Search", art: <><circle cx="14" cy="14" r="11" fill="#3d4445" stroke="#d9dee0" strokeWidth="2.400" /><path d="M22 22l7 7.500" stroke="#cfd9e2" strokeWidth="3.500" strokeLinecap="round" /></> },
  { name: "Task view", art: <><rect x="9" y="2" width="22" height="20" rx="1.500" fill="#f0f0f0" /><rect x="1" y="10" width="22" height="20" rx="1.500" fill="#6c6e70" /><path d="M9 10h14v12H9z" fill="#a5a7a8" /></> },
  { name: "Mail", art: <><path d="M1 12L16 1.500 31 12v6H1z" fill="#0a56a8" /><path d="M4 11h24v10H4z" fill="#f4f6f8" /><path d="M1 12l15 10 15-10v18H1z" fill="#2aa5ea" /><path d="M1 30L31 12v18z" fill="#55c8f8" /></> },
  { name: "Store", art: <><path d="M9 8V2h14v6" fill="none" stroke="#29b4e8" strokeWidth="2" /><path d="M2 6.500h28V27q0 4-4 4H6q-4 0-4-4z" fill="#f1f1f1" /><path d="M10.500 13h5v5h-5z" fill="#f25022" /><path d="M16.800 13h5v5h-5z" fill="#7fba00" /><path d="M10.500 19.500h5v5h-5z" fill="#00a4ef" /><path d="M16.800 19.500h5v5h-5z" fill="#ffb900" /></> },
  { name: "Edge", art: <><defs><linearGradient id="edge" x1="0" y1="0" x2="1" y2=".6"><stop offset=".2" stopColor="#1fa3e0" /><stop offset="1" stopColor="#62dc5c" /></linearGradient></defs><circle cx="16" cy="16" r="15" fill="#1269bd" /><path d="M1 15Q2 1 16 1t15 13q0 8-9 8-4 0-3-3 2-9-7-9-8 0-11 5z" fill="url(#edge)" /><path d="M12 10q9 1 7 9-1 3 4 3 4 0 6-2l1 3q-6 4-12 2-7-3-6-15z" fill="#1e2425" /><path d="M1 15q2-7 11-5-6 8-1 15 4 5 11 5Q8 34 3 24q-2-4-2-9z" fill="#1b86d8" /></> },
  { name: "Explorer", state: "open", art: <><path d="M1 5q0-2 2-2h8l4 4h14v6H1z" fill="#e8a005" /><path d="M1 9h11l3-2h14q2 0 2 2v18q0 2-2 2H3q-2 0-2-2z" fill="#fdc93a" /><path d="M6 29v-6q0-2 2-2h16q2 0 2 2v6z" fill="#1677cf" /><path d="M10 25h12" stroke="#0a4c8e" strokeWidth="1.500" /></> },
  { name: "Chrome", state: "active", art: <><circle cx="15" cy="17" r="14" fill="#fbc116" /><path d="M2.900 10A14 14 0 0 1 27.100 10H15L9.500 20z" fill="#e33b2e" /><path d="M2.900 10A14 14 0 0 0 15 31l5.600-10.700L9.400 20.300z" fill="#229a4c" /><circle cx="15" cy="17" r="6.800" fill="#fff" /><circle cx="15" cy="17" r="5.300" fill="#3f83f0" /><g transform="translate(15 -5) scale(.72)"><Portrait size={27} /></g></> },
  { name: "Python", art: <><path d="M1 2h27v24H1z" fill="#4a4d4f" /><path d="M1 2h27v3H1z" fill="#1e6fb5" /><path d="M4 9h7M4 13h5M4 17h7" stroke="#3f8f4f" strokeWidth="1.400" /><path d="M19 10.500q-5 0-5 3.500v2.500h6v1h-8q-3 0-3 4.500t3 4.500h2v-3q0-2.500 3-2.500h5q3 0 3-3v-4q0-3.500-6-3.500z" fill="#3d85c0" /><path d="M21 32q5 0 5-3.500V26h-6v-1h7.500q3.500 0 3.500-4.500T27.500 16H26v3q0 3-3 3h-5q-3 0-3 3v3.500q0 3.500 6 3.500z" fill="#fcd748" /></> },
  { name: "Word", state: "open", art: <><path d="M17 5h11v22H17z" fill="#fff" stroke="#2b579a" /><path d="M18 9h8M18 13h8M18 17h8M18 21h8M18 25h8" stroke="#2b579a" strokeWidth="1.500" /><path d="M2 5l16-4v30L2 27z" fill="#2b579a" /><path d="M5 11l2 10 3-9 3 9 2-10" fill="none" stroke="#fff" strokeWidth="1.900" /></> },
  { name: "Code", state: "open", art: <><path d="M22 1L2 19v3l3 2.500L22.500 10z" fill="#0d6fb5" /><path d="M22 31L2 13v-3l3-2.500L22.500 22z" fill="#1c8fdd" /><path d="M22 .5l8 4v23l-8 4z" fill="#33a9f2" /></> },
  { name: "Notepad", state: "open", art: <><path d="M5 3h22v26H5z" fill="#5cc3dc" /><path d="M5 27h22v2H5z" fill="#fff" /><path d="M5 29h22v2H5z" fill="#b5651d" /><path d="M9 11h13M9 16h13M9 21h13" stroke="#136b86" strokeWidth="2" /><path d="M7 0v5M11 0v5M15 0v5M19 0v5M23 0v5" stroke="#0f5670" strokeWidth="1.800" /></> },
  { name: "Acrobat", state: "open", art: <><rect x="3" y="2" width="26" height="27" fill="#2a0604" stroke="#e2190f" strokeWidth="2.400" /><path d="M15 7q2 6-6 16-2 1-1-1 3-4 15-5 2 1 0 2-7-1-9-12 0-2 1 0z" fill="none" stroke="#fff" strokeWidth="1.300" /></> },
];

const WindowsTaskbar = () => (
  <Taskbar>
    <Weather>
      <svg width="30" height="30" viewBox="0 0 30 30">
        <path d="M18 1q12 4 9 18l-8 3q4-11-1-21z" fill="#fbb917" />
        <path d="M7 27q-6 0-6-6t6-6q1-6 8-6 6 0 7 6 7 0 7 6t-6 6z" fill="#8ea6bf" />
        <path d="M5 17q7 6 14 0 4-3 6 0-4 9-12 8-7-1-8-8z" fill="#c9c6a2" />
      </svg>
      <div>
        <div>28°C</div>
        <Muted>Haze</Muted>
      </div>
    </Weather>
    <Apps>
      {apps.map((a) => (
        <AppButton key={a.name} $state={a.state} aria-label={a.name}><AppSvg>{a.art}</AppSvg></AppButton>
      ))}
    </Apps>
    <Tray>
      <TrayIcon aria-label="Hidden icons"><svg width="16" height="10" viewBox="0 0 16 10" fill="none" stroke="#fff" strokeWidth="1.300"><path d="M1 9l7-7.500L15 9" /></svg></TrayIcon>
      <TrayIcon aria-label="OneDrive"><svg width="22" height="20" viewBox="0 0 22 20"><path d="M4 14q-4 0-4-4t5-4q2-5 7-5 5 1 6 6 3 3 0 7z" fill="#c9cbcc" /><path d="M5 6q2-5 7-5 5 1 5 6-4-2-7 1-2-3-5-2z" fill="#8b8e90" /><circle cx="15" cy="13" r="6" fill="#d3202e" /><path d="M12.500 10.500l5 5M17.500 10.500l-5 5" stroke="#fff" strokeWidth="1.600" /></svg></TrayIcon>
      <Language>ENG<br />IN</Language>
      <TrayIcon aria-label="Wi-Fi"><svg width="20" height="16" viewBox="0 0 20 16" fill="none" stroke="#fff" strokeWidth="1.500"><path d="M.8 6.500Q10-4 19.200 6.500M3.500 9Q10 1 16.500 9M6.200 11.500q3.800-4.500 7.600 0" /><circle cx="10" cy="13.500" r="1.800" fill="#fff" stroke="none" /></svg></TrayIcon>
      <TrayIcon aria-label="Volume"><svg width="20" height="18" viewBox="0 0 20 18" fill="none" stroke="#fff" strokeWidth="1.400"><path d="M1 6.500h3l4-4v13l-4-4H1zM10.500 6.500q1.800 2.500 0 5M13 4q3.500 5 0 10" /><path d="M16 2q4.500 7 0 14" stroke="#6b7071" /></svg></TrayIcon>
      <TrayIcon aria-label="Battery"><svg width="22" height="18" viewBox="0 0 22 18"><path d="M8 4.500h10q1.500 0 1.500 1.500v8q0 1.500-1.500 1.500H3q-1.500 0-1.500-1.500V10M20.500 8v4" fill="none" stroke="#fff" strokeWidth="1.400" /><path d="M9 6.500h8.500v7h-14V11H7z" fill="#fff" /><path d="M5 0L1 6h2.500L2.500 10 7 4.500H4.500z" fill="#fff" /></svg></TrayIcon>
      <Clock>03:36<br />28-07-2022</Clock>
      <Notifications aria-label="12 notifications">12</Notifications>
    </Tray>
  </Taskbar>
);

export default function App() {
  return (
    <Desktop>
      <GlobalStyle />
      <BrowserChrome />
      <Site />
      <WindowsTaskbar />
    </Desktop>
  );
}
